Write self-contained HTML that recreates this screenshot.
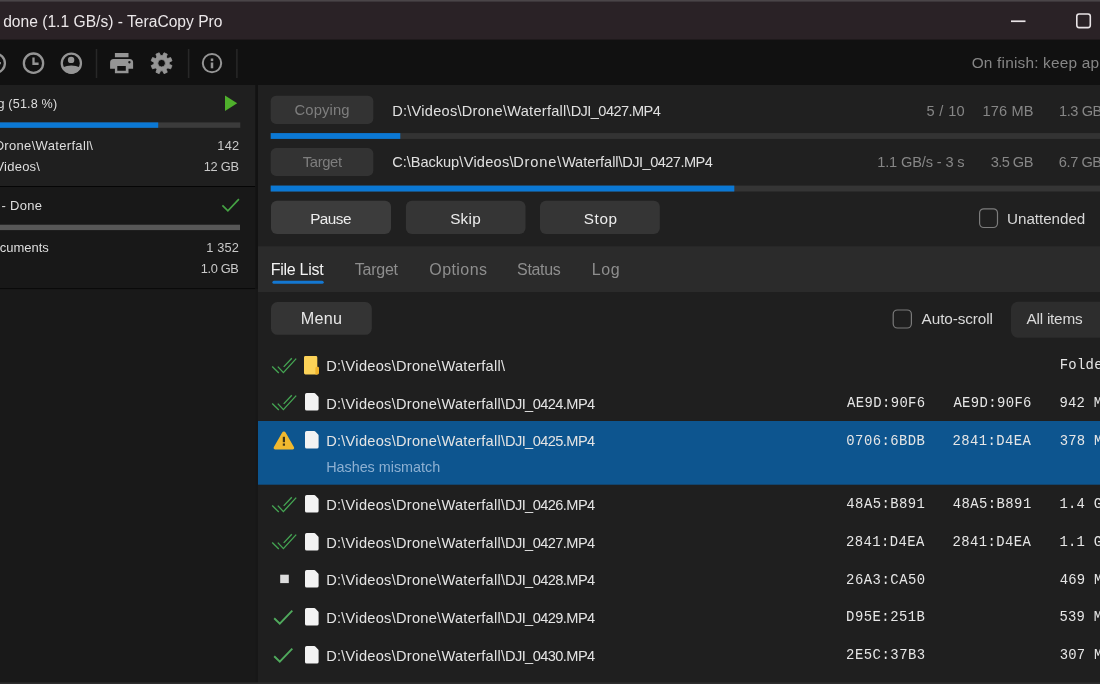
<!DOCTYPE html>
<html><head><meta charset="utf-8"><title>TeraCopy Pro</title>
<style>html,body{margin:0;padding:0;background:#1f1f1f;overflow:hidden;}body{width:1100px;height:684px;position:relative;overflow:hidden;font-family:"Liberation Sans",sans-serif;}</style></head>
<body>
<svg style="position:absolute;left:0;top:0" width="1100" height="684" viewBox="0 0 1100 684">
<rect x="0" y="0" width="1100" height="40" fill="#2a2226"/>
<rect x="0" y="0" width="1100" height="1.6" fill="#4a4548"/>
<rect x="0" y="39.6" width="1100" height="45.4" fill="#111111"/>
<rect x="0" y="85" width="255.3" height="101.1" fill="#1f1f1f"/>
<rect x="0" y="186.05" width="255.3" height="1.0" fill="#050505"/>
<rect x="0" y="187" width="255.3" height="101.1" fill="#181818"/>
<rect x="0" y="288.05" width="255.3" height="1.3" fill="#0a0a0a"/>
<rect x="0" y="289.3" width="255.3" height="395" fill="#191919"/>
<rect x="255.3" y="85" width="2.7" height="204.3" fill="#121212"/>
<rect x="255.3" y="289.3" width="2.7" height="395" fill="#171717"/>
<rect x="258" y="85" width="842" height="161.3" fill="#202020"/>
<rect x="258" y="246.3" width="842" height="45.7" fill="#2b2b2b"/>
<rect x="258" y="292" width="842" height="392" fill="#1f1f1f"/>
<rect x="0" y="122.4" width="240.3" height="5.4" fill="#3b3b3b"/>
<rect x="0" y="122.4" width="158.2" height="5.4" fill="#0b78d4"/>
<rect x="0" y="224.7" width="240" height="5.4" fill="#575757"/>
<rect x="270.7" y="95.7" width="102.6" height="28.2" rx="5.5" fill="#333333"/>
<rect x="270.7" y="148.1" width="102.6" height="27.8" rx="5.5" fill="#333333"/>
<rect x="270.7" y="133.1" width="830" height="5.8" fill="#333333"/>
<rect x="270.7" y="133.1" width="129.6" height="5.8" fill="#0b78d4"/>
<rect x="270.7" y="185.6" width="830" height="5.9" fill="#353535"/>
<rect x="270.7" y="185.6" width="463.6" height="5.9" fill="#0b78d4"/>
<rect x="271" y="200.8" width="120" height="33.3" rx="6" fill="#3c3c3c"/>
<rect x="405.9" y="200.8" width="119.6" height="33.3" rx="6" fill="#353535"/>
<rect x="540" y="200.8" width="119.8" height="33.3" rx="6" fill="#353535"/>
<rect x="272.4" y="280.7" width="51.3" height="3" rx="1.5" fill="#1478d2"/>
<rect x="271" y="302" width="100.8" height="32.8" rx="6.5" fill="#343434"/>
<rect x="1011" y="301.7" width="100" height="36" rx="7" fill="#2d2d2d"/>
<rect x="258" y="421" width="842" height="63.7" fill="#0d558f"/>
<rect x="280.2" y="574.7" width="8.6" height="8.4" fill="#dcdcdc"/>
<rect x="0" y="682.4" width="1100" height="1.6" fill="#2d2d2d"/>
</svg>
<svg style="position:absolute;left:1005px;top:14px" width="26" height="14" viewBox="1005 14 26 14"><path d="M1011 21.25H1025.5" stroke="#e9e4e6" stroke-width="1.7" fill="none"/></svg>
<svg style="position:absolute;left:1070px;top:8px" width="30" height="26" viewBox="1070 8 30 26"><rect x="1076.8" y="14" width="13.5" height="13.6" rx="2.3" fill="none" stroke="#e9e4e6" stroke-width="1.6"/></svg>
<svg style="position:absolute;left:0;top:40px" width="260" height="45" viewBox="0 40 260 45">
<g fill="none" stroke="#959595" stroke-width="2.3">
<circle cx="-4.7" cy="63.2" r="9.6"/>
<path d="M-10 63.2H0.9"/>
<circle cx="33.5" cy="63.15" r="9.65"/>
<path d="M33.5 57.6V63.75H38.6"/>
<circle cx="71.35" cy="63.15" r="9.6"/>
</g>
<circle cx="212" cy="63.1" r="9.2" fill="none" stroke="#959595" stroke-width="2"/>
<g fill="#959595">
<circle cx="71.1" cy="59.9" r="3.2"/>
<path d="M62.4 67.6 Q71.3 63.4 80.3 67.6 A9.6 9.6 0 0 1 62.4 67.6Z"/>
<rect x="210.75" y="62.5" width="2.5" height="5.8"/>
<rect x="210.75" y="58.5" width="2.5" height="2.6"/>
<rect x="114.9" y="53" width="13.6" height="4.25"/>
<path fill-rule="evenodd" d="M113.6 59H129.6a3.5 3.5 0 0 1 3.5 3.5V68.8H128.5V73.3H114.9V68.8H110.1V62.5a3.5 3.5 0 0 1 3.5 -3.5Z M117.3 65.9V70.7H125.8V65.9Z M129.4 61a1.2 1.2 0 1 0 .01 0Z"/>
<path fill-rule="evenodd" d="M162.61 55.57L164.01 52.77L167.27 54.13L166.29 57.09L167.71 58.51L170.67 57.53L172.03 60.79L169.23 62.19L169.23 64.21L172.03 65.61L170.67 68.87L167.71 67.89L166.29 69.31L167.27 72.27L164.01 73.63L162.61 70.83L160.59 70.83L159.19 73.63L155.93 72.27L156.91 69.31L155.49 67.89L152.53 68.87L151.17 65.61L153.97 64.21L153.97 62.19L151.17 60.79L152.53 57.53L155.49 58.51L156.91 57.09L155.93 54.13L159.19 52.77L160.59 55.57ZM157.80 63.2a3.8 3.8 0 1 0 7.6 0a3.8 3.8 0 1 0 -7.6 0Z" stroke="#959595" stroke-width="0.8" stroke-linejoin="round"/>
</g>
<g stroke="#282828" stroke-width="1.5">
<path d="M96.5 49V78M188.6 49V78M236.9 49V78"/>
</g>
</svg>
<svg style="position:absolute;left:224px;top:94px" width="15" height="19" viewBox="224 94 15 19"><path d="M225 95.4L237.2 103.2L225 111Z" fill="#4fb02c"/></svg>
<svg style="position:absolute;left:220px;top:196px" width="22" height="18" viewBox="220 196 22 18"><path d="M222.4 205.4L227.9 210.9L238.9 199.2" fill="none" stroke="#45a244" stroke-width="1.7"/></svg>
<svg style="position:absolute;left:974px;top:204px" width="30" height="30" viewBox="974 204 30 30"><rect x="979.6" y="208.8" width="17.9" height="18.7" rx="4.2" fill="none" stroke="#7c7c7c" stroke-width="1.2"/></svg>
<svg style="position:absolute;left:888px;top:304px" width="30" height="30" viewBox="888 304 30 30"><rect x="893.2" y="310" width="18.2" height="18" rx="4.2" fill="none" stroke="#7a7a7a" stroke-width="1.2"/></svg>
<svg style="position:absolute;left:270px;top:354.60px" width="30" height="22" viewBox="270 354.60 30 22"><g fill="none" stroke="#45a553" stroke-width="1.35"><path d="M272.2 366.2L278.8 372.6"/><path d="M277.8 366.2L283.4 372.2L296.2 358.2"/><path d="M283.7 366.5L291.8 357.9"/></g></svg>
<svg style="position:absolute;left:303.9px;top:355.70px" width="16" height="19" viewBox="0 0 16 19"><path d="M1.4 0H11.9a1.4 1.4 0 0 1 1.4 1.4V18.4H1.4A1.4 1.4 0 0 1 0 17V1.4A1.4 1.4 0 0 1 1.4 0Z" fill="#fbd258"/><path d="M11.4 12Q11.6 10.7 13 10.7H13.7a1.3 1.3 0 0 1 1.3 1.3V17.1a1.3 1.3 0 0 1 -1.3 1.3H11.4Z" fill="#f1b42c"/></svg>
<svg style="position:absolute;left:270px;top:392.30px" width="30" height="22" viewBox="270 354.60 30 22"><g fill="none" stroke="#45a553" stroke-width="1.35"><path d="M272.2 366.2L278.8 372.6"/><path d="M277.8 366.2L283.4 372.2L296.2 358.2"/><path d="M283.7 366.5L291.8 357.9"/></g></svg>
<svg style="position:absolute;left:304.7px;top:393.40px" width="14" height="18" viewBox="0 0 14 18"><path d="M1.7 0H9.3Q9.9 0 10.3 0.4L13.2 3.5Q13.6 3.9 13.6 4.5V15.9a1.7 1.7 0 0 1 -1.7 1.7H1.7a1.7 1.7 0 0 1 -1.7 -1.7V1.7A1.7 1.7 0 0 1 1.7 0Z" fill="#f3f3f3"/></svg>
<svg style="position:absolute;left:273px;top:431.00px" width="23" height="20" viewBox="0 0 23 20"><path d="M10.9 0.4Q12 0.4 12.6 1.5L20.9 15.9Q21.9 18.2 19.6 18.4H2.2Q-0.1 18.2 0.9 15.9L9.2 1.5Q9.8 0.4 10.9 0.4Z" fill="#f0b92f"/><rect x="9.8" y="5.8" width="2.2" height="5.4" fill="#3d3418"/><rect x="9.8" y="12.5" width="2.2" height="2.2" fill="#3d3418"/></svg>
<svg style="position:absolute;left:304.7px;top:431.10px" width="14" height="18" viewBox="0 0 14 18"><path d="M1.7 0H9.3Q9.9 0 10.3 0.4L13.2 3.5Q13.6 3.9 13.6 4.5V15.9a1.7 1.7 0 0 1 -1.7 1.7H1.7a1.7 1.7 0 0 1 -1.7 -1.7V1.7A1.7 1.7 0 0 1 1.7 0Z" fill="#f3f3f3"/></svg>
<svg style="position:absolute;left:270px;top:493.70px" width="30" height="22" viewBox="270 354.60 30 22"><g fill="none" stroke="#45a553" stroke-width="1.35"><path d="M272.2 366.2L278.8 372.6"/><path d="M277.8 366.2L283.4 372.2L296.2 358.2"/><path d="M283.7 366.5L291.8 357.9"/></g></svg>
<svg style="position:absolute;left:304.7px;top:494.80px" width="14" height="18" viewBox="0 0 14 18"><path d="M1.7 0H9.3Q9.9 0 10.3 0.4L13.2 3.5Q13.6 3.9 13.6 4.5V15.9a1.7 1.7 0 0 1 -1.7 1.7H1.7a1.7 1.7 0 0 1 -1.7 -1.7V1.7A1.7 1.7 0 0 1 1.7 0Z" fill="#f3f3f3"/></svg>
<svg style="position:absolute;left:270px;top:531.40px" width="30" height="22" viewBox="270 354.60 30 22"><g fill="none" stroke="#45a553" stroke-width="1.35"><path d="M272.2 366.2L278.8 372.6"/><path d="M277.8 366.2L283.4 372.2L296.2 358.2"/><path d="M283.7 366.5L291.8 357.9"/></g></svg>
<svg style="position:absolute;left:304.7px;top:532.50px" width="14" height="18" viewBox="0 0 14 18"><path d="M1.7 0H9.3Q9.9 0 10.3 0.4L13.2 3.5Q13.6 3.9 13.6 4.5V15.9a1.7 1.7 0 0 1 -1.7 1.7H1.7a1.7 1.7 0 0 1 -1.7 -1.7V1.7A1.7 1.7 0 0 1 1.7 0Z" fill="#f3f3f3"/></svg>
<svg style="position:absolute;left:304.7px;top:570.20px" width="14" height="18" viewBox="0 0 14 18"><path d="M1.7 0H9.3Q9.9 0 10.3 0.4L13.2 3.5Q13.6 3.9 13.6 4.5V15.9a1.7 1.7 0 0 1 -1.7 1.7H1.7a1.7 1.7 0 0 1 -1.7 -1.7V1.7A1.7 1.7 0 0 1 1.7 0Z" fill="#f3f3f3"/></svg>
<svg style="position:absolute;left:270px;top:606.80px" width="30" height="22" viewBox="270 606.9 30 22"><path d="M274.2 618.1L279.8 623.6L292.3 610.5" fill="none" stroke="#50aa5d" stroke-width="1.9"/></svg>
<svg style="position:absolute;left:304.7px;top:607.90px" width="14" height="18" viewBox="0 0 14 18"><path d="M1.7 0H9.3Q9.9 0 10.3 0.4L13.2 3.5Q13.6 3.9 13.6 4.5V15.9a1.7 1.7 0 0 1 -1.7 1.7H1.7a1.7 1.7 0 0 1 -1.7 -1.7V1.7A1.7 1.7 0 0 1 1.7 0Z" fill="#f3f3f3"/></svg>
<svg style="position:absolute;left:270px;top:644.50px" width="30" height="22" viewBox="270 606.9 30 22"><path d="M274.2 618.1L279.8 623.6L292.3 610.5" fill="none" stroke="#50aa5d" stroke-width="1.9"/></svg>
<svg style="position:absolute;left:304.7px;top:645.60px" width="14" height="18" viewBox="0 0 14 18"><path d="M1.7 0H9.3Q9.9 0 10.3 0.4L13.2 3.5Q13.6 3.9 13.6 4.5V15.9a1.7 1.7 0 0 1 -1.7 1.7H1.7a1.7 1.7 0 0 1 -1.7 -1.7V1.7A1.7 1.7 0 0 1 1.7 0Z" fill="#f3f3f3"/></svg>
<div style="position:absolute;left:0;top:0;width:1100px;height:684px;overflow:hidden;will-change:transform">
<div style="position:absolute;left:3.15px;top:9.59px;line-height:24px;font-size:15.6px;color:#ebe7e9;letter-spacing:0.012px;white-space:pre;font-family:'Liberation Sans',sans-serif;font-weight:400;">done (1.1 GB/s) - TeraCopy Pro</div>
<div style="position:absolute;left:971.65px;top:51.16px;line-height:24px;font-size:15.4px;color:#868686;letter-spacing:0.197px;white-space:pre;font-family:'Liberation Sans',sans-serif;font-weight:400;">On finish: keep app open</div>
<div style="position:absolute;left:-2.51px;top:91.93px;line-height:24px;font-size:12.6px;color:#dedede;letter-spacing:0.171px;white-space:pre;font-family:'Liberation Sans',sans-serif;font-weight:400;">g (51.8 %)</div>
<div style="position:absolute;left:-5.37px;top:133.50px;line-height:24px;font-size:13px;color:#dedede;letter-spacing:0.325px;white-space:pre;font-family:'Liberation Sans',sans-serif;font-weight:400;">Drone\Waterfall\</div>
<div style="position:absolute;left:217.30px;top:133.56px;line-height:24px;font-size:12.8px;color:#c9c9c9;letter-spacing:0.225px;white-space:pre;font-family:'Liberation Sans',sans-serif;font-weight:400;">142</div>
<div style="position:absolute;left:-4.54px;top:154.80px;line-height:24px;font-size:13px;color:#dedede;letter-spacing:0.220px;white-space:pre;font-family:'Liberation Sans',sans-serif;font-weight:400;">Videos\</div>
<div style="position:absolute;left:203.70px;top:154.86px;line-height:24px;font-size:12.8px;color:#c9c9c9;letter-spacing:-0.237px;white-space:pre;font-family:'Liberation Sans',sans-serif;font-weight:400;">12 GB</div>
<div style="position:absolute;left:1.50px;top:194.10px;line-height:24px;font-size:13px;color:#dedede;letter-spacing:0.300px;white-space:pre;font-family:'Liberation Sans',sans-serif;font-weight:400;">- Done</div>
<div style="position:absolute;left:-0.30px;top:235.80px;line-height:24px;font-size:13px;color:#dedede;letter-spacing:-0.008px;white-space:pre;font-family:'Liberation Sans',sans-serif;font-weight:400;">cuments</div>
<div style="position:absolute;left:206.30px;top:236.06px;line-height:24px;font-size:12.8px;color:#c9c9c9;letter-spacing:0.125px;white-space:pre;font-family:'Liberation Sans',sans-serif;font-weight:400;">1 352</div>
<div style="position:absolute;left:200.70px;top:257.16px;line-height:24px;font-size:12.8px;color:#c9c9c9;letter-spacing:-0.330px;white-space:pre;font-family:'Liberation Sans',sans-serif;font-weight:400;">1.0 GB</div>
<div style="position:absolute;left:294.55px;top:97.77px;line-height:24px;font-size:14.8px;color:#7e7e7e;letter-spacing:0.125px;white-space:pre;font-family:'Liberation Sans',sans-serif;font-weight:400;">Copying</div>
<div style="position:absolute;left:302.75px;top:149.87px;line-height:24px;font-size:14.8px;color:#7e7e7e;letter-spacing:-0.370px;white-space:pre;font-family:'Liberation Sans',sans-serif;font-weight:400;">Target</div>
<div style="position:absolute;left:392.15px;top:98.84px;line-height:24px;font-size:14.6px;color:#e0e0e0;letter-spacing:0.262px;white-space:pre;font-family:'Liberation Sans',sans-serif;font-weight:400;">D:\Videos\Drone\Waterfall\</div>
<div style="position:absolute;left:570.65px;top:98.84px;line-height:24px;font-size:14.6px;color:#e0e0e0;letter-spacing:-0.573px;white-space:pre;font-family:'Liberation Sans',sans-serif;font-weight:400;">DJI_0427.MP4</div>
<div style="position:absolute;left:392.35px;top:149.84px;line-height:24px;font-size:14.6px;color:#e0e0e0;letter-spacing:-0.056px;white-space:pre;font-family:'Liberation Sans',sans-serif;font-weight:400;">C:\Backup\</div>
<div style="position:absolute;left:463.70px;top:149.84px;line-height:24px;font-size:14.6px;color:#e0e0e0;letter-spacing:0.233px;white-space:pre;font-family:'Liberation Sans',sans-serif;font-weight:400;">Videos\</div>
<div style="position:absolute;left:513.15px;top:149.84px;line-height:24px;font-size:14.6px;color:#e0e0e0;letter-spacing:0.880px;white-space:pre;font-family:'Liberation Sans',sans-serif;font-weight:400;">Drone\</div>
<div style="position:absolute;left:561.90px;top:149.84px;line-height:24px;font-size:14.6px;color:#e0e0e0;letter-spacing:-0.044px;white-space:pre;font-family:'Liberation Sans',sans-serif;font-weight:400;">Waterfall\</div>
<div style="position:absolute;left:622.35px;top:149.84px;line-height:24px;font-size:14.6px;color:#e0e0e0;letter-spacing:-0.555px;white-space:pre;font-family:'Liberation Sans',sans-serif;font-weight:400;">DJI_0427.MP4</div>
<div style="position:absolute;left:926.50px;top:98.84px;line-height:24px;font-size:14.6px;color:#868686;letter-spacing:0.340px;white-space:pre;font-family:'Liberation Sans',sans-serif;font-weight:400;">5 / 10</div>
<div style="position:absolute;left:982.50px;top:98.84px;line-height:24px;font-size:14.6px;color:#868686;letter-spacing:0.140px;white-space:pre;font-family:'Liberation Sans',sans-serif;font-weight:400;">176 MB</div>
<div style="position:absolute;left:1059.10px;top:98.84px;line-height:24px;font-size:14.6px;color:#868686;letter-spacing:-0.450px;white-space:pre;font-family:'Liberation Sans',sans-serif;font-weight:400;">1.3 GB</div>
<div style="position:absolute;left:877.20px;top:150.14px;line-height:24px;font-size:14.6px;color:#868686;letter-spacing:-0.135px;white-space:pre;font-family:'Liberation Sans',sans-serif;font-weight:400;">1.1 GB/s - 3 s</div>
<div style="position:absolute;left:990.70px;top:150.14px;line-height:24px;font-size:14.6px;color:#868686;letter-spacing:-0.550px;white-space:pre;font-family:'Liberation Sans',sans-serif;font-weight:400;">3.5 GB</div>
<div style="position:absolute;left:1058.85px;top:150.14px;line-height:24px;font-size:14.6px;color:#868686;letter-spacing:-0.440px;white-space:pre;font-family:'Liberation Sans',sans-serif;font-weight:400;">6.7 GB</div>
<div style="position:absolute;left:310.15px;top:206.80px;line-height:24px;font-size:15.3px;color:#ededed;letter-spacing:-0.525px;white-space:pre;font-family:'Liberation Sans',sans-serif;font-weight:400;">Pause</div>
<div style="position:absolute;left:450.15px;top:206.80px;line-height:24px;font-size:15.3px;color:#ededed;letter-spacing:0.267px;white-space:pre;font-family:'Liberation Sans',sans-serif;font-weight:400;">Skip</div>
<div style="position:absolute;left:583.75px;top:206.80px;line-height:24px;font-size:15.3px;color:#ededed;letter-spacing:0.600px;white-space:pre;font-family:'Liberation Sans',sans-serif;font-weight:400;">Stop</div>
<div style="position:absolute;left:1007.10px;top:206.73px;line-height:24px;font-size:15.2px;color:#d8d8d8;letter-spacing:-0.044px;white-space:pre;font-family:'Liberation Sans',sans-serif;font-weight:400;">Unattended</div>
<div style="position:absolute;left:270.65px;top:257.56px;line-height:24px;font-size:16px;color:#f4f4f4;letter-spacing:-0.269px;white-space:pre;font-family:'Liberation Sans',sans-serif;font-weight:400;">File List</div>
<div style="position:absolute;left:354.75px;top:258.16px;line-height:24px;font-size:16px;color:#8e8e8e;letter-spacing:-0.230px;white-space:pre;font-family:'Liberation Sans',sans-serif;font-weight:400;">Target</div>
<div style="position:absolute;left:429.25px;top:258.16px;line-height:24px;font-size:16px;color:#8e8e8e;letter-spacing:0.442px;white-space:pre;font-family:'Liberation Sans',sans-serif;font-weight:400;">Options</div>
<div style="position:absolute;left:517.05px;top:258.16px;line-height:24px;font-size:16px;color:#8e8e8e;letter-spacing:-0.340px;white-space:pre;font-family:'Liberation Sans',sans-serif;font-weight:400;">Status</div>
<div style="position:absolute;left:591.85px;top:258.16px;line-height:24px;font-size:16px;color:#8e8e8e;letter-spacing:0.550px;white-space:pre;font-family:'Liberation Sans',sans-serif;font-weight:400;">Log</div>
<div style="position:absolute;left:300.75px;top:306.39px;line-height:24px;font-size:16.2px;color:#e6e6e6;letter-spacing:0.283px;white-space:pre;font-family:'Liberation Sans',sans-serif;font-weight:400;">Menu</div>
<div style="position:absolute;left:921.60px;top:307.40px;line-height:24px;font-size:15.3px;color:#dadada;letter-spacing:-0.085px;white-space:pre;font-family:'Liberation Sans',sans-serif;font-weight:400;">Auto-scroll</div>
<div style="position:absolute;left:1026.60px;top:307.40px;line-height:24px;font-size:15.3px;color:#dadada;letter-spacing:-0.231px;white-space:pre;font-family:'Liberation Sans',sans-serif;font-weight:400;">All items</div>
<div style="position:absolute;left:326.15px;top:353.84px;line-height:24px;font-size:14.6px;color:#e4e4e4;letter-spacing:0.278px;white-space:pre;font-family:'Liberation Sans',sans-serif;font-weight:400;">D:\Videos\Drone\Waterfall\</div>
<div style="position:absolute;left:1059.75px;top:353.19px;line-height:24px;font-size:13.9px;color:#e6e6e6;letter-spacing:0.259px;white-space:pre;font-family:'Liberation Mono',monospace;font-weight:400;">Folder</div>
<div style="position:absolute;left:326.15px;top:391.54px;line-height:24px;font-size:14.6px;color:#e4e4e4;letter-spacing:0.278px;white-space:pre;font-family:'Liberation Sans',sans-serif;font-weight:400;">D:\Videos\Drone\Waterfall\</div>
<div style="position:absolute;left:504.95px;top:391.54px;line-height:24px;font-size:14.6px;color:#e4e4e4;letter-spacing:-0.573px;white-space:pre;font-family:'Liberation Sans',sans-serif;font-weight:400;">DJI_0424.MP4</div>
<div style="position:absolute;left:847.10px;top:390.89px;line-height:24px;font-size:13.9px;color:#e6e6e6;letter-spacing:0.381px;white-space:pre;font-family:'Liberation Mono',monospace;font-weight:400;">AE9D:90F6</div>
<div style="position:absolute;left:953.40px;top:390.89px;line-height:24px;font-size:13.9px;color:#e6e6e6;letter-spacing:0.381px;white-space:pre;font-family:'Liberation Mono',monospace;font-weight:400;">AE9D:90F6</div>
<div style="position:absolute;left:1059.40px;top:390.89px;line-height:24px;font-size:13.9px;color:#e6e6e6;letter-spacing:0.259px;white-space:pre;font-family:'Liberation Mono',monospace;font-weight:400;">942 MB</div>
<div style="position:absolute;left:326.15px;top:429.24px;line-height:24px;font-size:14.6px;color:#e4e4e4;letter-spacing:0.278px;white-space:pre;font-family:'Liberation Sans',sans-serif;font-weight:400;">D:\Videos\Drone\Waterfall\</div>
<div style="position:absolute;left:504.95px;top:429.24px;line-height:24px;font-size:14.6px;color:#e4e4e4;letter-spacing:-0.573px;white-space:pre;font-family:'Liberation Sans',sans-serif;font-weight:400;">DJI_0425.MP4</div>
<div style="position:absolute;left:846.35px;top:428.59px;line-height:24px;font-size:13.9px;color:#e6e6e6;letter-spacing:0.444px;white-space:pre;font-family:'Liberation Mono',monospace;font-weight:400;">0706:6BDB</div>
<div style="position:absolute;left:952.40px;top:428.59px;line-height:24px;font-size:13.9px;color:#e6e6e6;letter-spacing:0.413px;white-space:pre;font-family:'Liberation Mono',monospace;font-weight:400;">2841:D4EA</div>
<div style="position:absolute;left:1059.65px;top:428.59px;line-height:24px;font-size:13.9px;color:#e6e6e6;letter-spacing:0.259px;white-space:pre;font-family:'Liberation Mono',monospace;font-weight:400;">378 MB</div>
<div style="position:absolute;left:326.15px;top:492.94px;line-height:24px;font-size:14.6px;color:#e4e4e4;letter-spacing:0.278px;white-space:pre;font-family:'Liberation Sans',sans-serif;font-weight:400;">D:\Videos\Drone\Waterfall\</div>
<div style="position:absolute;left:504.95px;top:492.94px;line-height:24px;font-size:14.6px;color:#e4e4e4;letter-spacing:-0.573px;white-space:pre;font-family:'Liberation Sans',sans-serif;font-weight:400;">DJI_0426.MP4</div>
<div style="position:absolute;left:846.35px;top:492.29px;line-height:24px;font-size:13.9px;color:#e6e6e6;letter-spacing:0.444px;white-space:pre;font-family:'Liberation Mono',monospace;font-weight:400;">48A5:B891</div>
<div style="position:absolute;left:952.65px;top:492.29px;line-height:24px;font-size:13.9px;color:#e6e6e6;letter-spacing:0.444px;white-space:pre;font-family:'Liberation Mono',monospace;font-weight:400;">48A5:B891</div>
<div style="position:absolute;left:1059.40px;top:492.29px;line-height:24px;font-size:13.9px;color:#e6e6e6;letter-spacing:0.259px;white-space:pre;font-family:'Liberation Mono',monospace;font-weight:400;">1.4 GB</div>
<div style="position:absolute;left:326.15px;top:530.64px;line-height:24px;font-size:14.6px;color:#e4e4e4;letter-spacing:0.278px;white-space:pre;font-family:'Liberation Sans',sans-serif;font-weight:400;">D:\Videos\Drone\Waterfall\</div>
<div style="position:absolute;left:504.95px;top:530.64px;line-height:24px;font-size:14.6px;color:#e4e4e4;letter-spacing:-0.573px;white-space:pre;font-family:'Liberation Sans',sans-serif;font-weight:400;">DJI_0427.MP4</div>
<div style="position:absolute;left:846.10px;top:529.99px;line-height:24px;font-size:13.9px;color:#e6e6e6;letter-spacing:0.412px;white-space:pre;font-family:'Liberation Mono',monospace;font-weight:400;">2841:D4EA</div>
<div style="position:absolute;left:952.40px;top:529.99px;line-height:24px;font-size:13.9px;color:#e6e6e6;letter-spacing:0.413px;white-space:pre;font-family:'Liberation Mono',monospace;font-weight:400;">2841:D4EA</div>
<div style="position:absolute;left:1059.40px;top:529.99px;line-height:24px;font-size:13.9px;color:#e6e6e6;letter-spacing:0.259px;white-space:pre;font-family:'Liberation Mono',monospace;font-weight:400;">1.1 GB</div>
<div style="position:absolute;left:326.15px;top:568.34px;line-height:24px;font-size:14.6px;color:#e4e4e4;letter-spacing:0.278px;white-space:pre;font-family:'Liberation Sans',sans-serif;font-weight:400;">D:\Videos\Drone\Waterfall\</div>
<div style="position:absolute;left:504.95px;top:568.34px;line-height:24px;font-size:14.6px;color:#e4e4e4;letter-spacing:-0.573px;white-space:pre;font-family:'Liberation Sans',sans-serif;font-weight:400;">DJI_0428.MP4</div>
<div style="position:absolute;left:846.10px;top:567.69px;line-height:24px;font-size:13.9px;color:#e6e6e6;letter-spacing:0.506px;white-space:pre;font-family:'Liberation Mono',monospace;font-weight:400;">26A3:CA50</div>
<div style="position:absolute;left:1059.65px;top:567.69px;line-height:24px;font-size:13.9px;color:#e6e6e6;letter-spacing:0.259px;white-space:pre;font-family:'Liberation Mono',monospace;font-weight:400;">469 MB</div>
<div style="position:absolute;left:326.15px;top:606.04px;line-height:24px;font-size:14.6px;color:#e4e4e4;letter-spacing:0.278px;white-space:pre;font-family:'Liberation Sans',sans-serif;font-weight:400;">D:\Videos\Drone\Waterfall\</div>
<div style="position:absolute;left:504.95px;top:606.04px;line-height:24px;font-size:14.6px;color:#e4e4e4;letter-spacing:-0.573px;white-space:pre;font-family:'Liberation Sans',sans-serif;font-weight:400;">DJI_0429.MP4</div>
<div style="position:absolute;left:846.10px;top:605.39px;line-height:24px;font-size:13.9px;color:#e6e6e6;letter-spacing:0.475px;white-space:pre;font-family:'Liberation Mono',monospace;font-weight:400;">D95E:251B</div>
<div style="position:absolute;left:1059.40px;top:605.39px;line-height:24px;font-size:13.9px;color:#e6e6e6;letter-spacing:0.259px;white-space:pre;font-family:'Liberation Mono',monospace;font-weight:400;">539 MB</div>
<div style="position:absolute;left:326.15px;top:643.74px;line-height:24px;font-size:14.6px;color:#e4e4e4;letter-spacing:0.278px;white-space:pre;font-family:'Liberation Sans',sans-serif;font-weight:400;">D:\Videos\Drone\Waterfall\</div>
<div style="position:absolute;left:504.95px;top:643.74px;line-height:24px;font-size:14.6px;color:#e4e4e4;letter-spacing:-0.573px;white-space:pre;font-family:'Liberation Sans',sans-serif;font-weight:400;">DJI_0430.MP4</div>
<div style="position:absolute;left:846.10px;top:643.09px;line-height:24px;font-size:13.9px;color:#e6e6e6;letter-spacing:0.506px;white-space:pre;font-family:'Liberation Mono',monospace;font-weight:400;">2E5C:37B3</div>
<div style="position:absolute;left:1059.65px;top:643.09px;line-height:24px;font-size:13.9px;color:#e6e6e6;letter-spacing:0.259px;white-space:pre;font-family:'Liberation Mono',monospace;font-weight:400;">307 MB</div>
<div style="position:absolute;left:326.15px;top:455.01px;line-height:24px;font-size:14.4px;color:#8db0d2;letter-spacing:-0.025px;white-space:pre;font-family:'Liberation Sans',sans-serif;font-weight:400;">Hashes mismatch</div>
</div>
</body></html>
